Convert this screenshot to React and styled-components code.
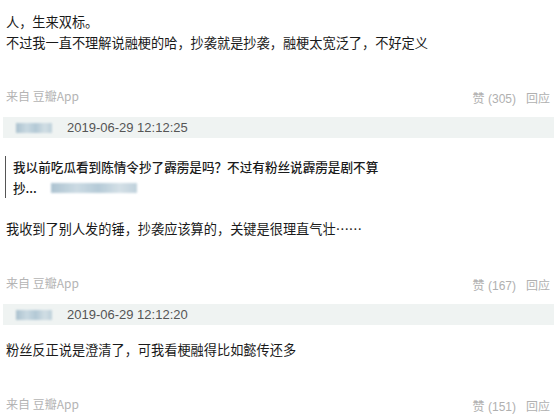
import styled, { createGlobalStyle } from "styled-components";

const GlobalStyle = createGlobalStyle`
  html, body {
    margin: 0;
    padding: 0;
    background: #ffffff;
  }
  body {
    font-family: "Noto Sans CJK SC", "Liberation Sans", sans-serif;
  }
`;

const Page = styled.div`
  width: 554px;
  height: 420px;
  overflow: hidden;
  padding: 11px 4px 0 6px;
  box-sizing: border-box;
`;

const Comment = styled.div`
  display: flex;
  flex-direction: column;
`;

const Text = styled.p`
  margin: ${(p) => p.$top || 0}px 0 0;
  font-size: 13.2px;
  line-height: 21px;
  color: #1a1a1a;
  white-space: nowrap;
`;

const Quote = styled.blockquote`
  margin: 18px 0 0 -1px;
  padding-left: 7px;
  border-left: 1px solid #555;
  font-size: 12.6px;
  line-height: 21px;
  color: #1a1a1a;
  font-weight: 500;
`;

const QuoteLine = styled.div`
  display: flex;
  align-items: center;
  white-space: nowrap;
`;

const Blur = styled.span`
  display: inline-block;
  width: ${(p) => p.$w}px;
  height: ${(p) => p.$h}px;
  margin-left: ${(p) => p.$ml || 0}px;
  background: linear-gradient(
    90deg,
    #9fb9c9 0%,
    #c3d5df 30%,
    #a9c2d1 55%,
    #cddbe3 80%,
    #b5cad6 100%
  );
  filter: blur(1.2px);
  opacity: 0.85;
`;

const Footer = styled.div`
  margin-top: ${(p) => p.$top || 35}px;
  display: flex;
  justify-content: space-between;
  align-items: flex-start;
  font-size: 12px;
  line-height: 18px;
  color: #b4b4b4;
`;

const Source = styled.span`
  padding-left: 0;
`;

const Actions = styled.span`
  display: flex;
  gap: 10px;
  padding-top: 3px;
  font-family: "Liberation Sans", "Noto Sans CJK SC", sans-serif;
  color: #b0b0b0;
`;

const Band = styled.div`
  margin: 9px -4px 0 -3px;
  height: 21px;
  display: flex;
  align-items: center;
  padding-left: 13px;
  background: #eff3f2;
`;

const Time = styled.span`
  margin-left: 15px;
  font-family: "Liberation Sans", sans-serif;
  font-size: 13px;
  color: #555;
`;

const Meta = ({ likes, top }) => (
  <Footer $top={top}>
    <Source>来自 豆瓣App</Source>
    <Actions>
      <span>赞 ({likes})</span>
      <span>回应</span>
    </Actions>
  </Footer>
);

const Stamp = ({ time }) => (
  <Band>
    <Blur $w={36} $h={10} />
    <Time>{time}</Time>
  </Band>
);

export default function App() {
  return (
    <>
      <GlobalStyle />
      <Page>
        <Comment>
          <Text>人，生来双标。</Text>
          <Text>不过我一直不理解说融梗的哈，抄袭就是抄袭，融梗太宽泛了，不好定义</Text>
          <Meta likes={305} top={34} />
          <Stamp time="2019-06-29 12:12:25" />
        </Comment>
        <Comment>
          <Quote>
            <QuoteLine>我以前吃瓜看到陈情令抄了霹雳是吗？不过有粉丝说霹雳是剧不算</QuoteLine>
            <QuoteLine>
              抄...
              <Blur $w={86} $h={10} $ml={14} />
            </QuoteLine>
          </Quote>
          <Text $top={20}>我收到了别人发的锤，抄袭应该算的，关键是很理直气壮……</Text>
          <Meta likes={167} top={35} />
          <Stamp time="2019-06-29 12:12:20" />
        </Comment>
        <Comment>
          <Text $top={14}>粉丝反正说是澄清了，可我看梗融得比如懿传还多</Text>
          <Meta likes={151} top={35} />
        </Comment>
      </Page>
    </>
  );
}
